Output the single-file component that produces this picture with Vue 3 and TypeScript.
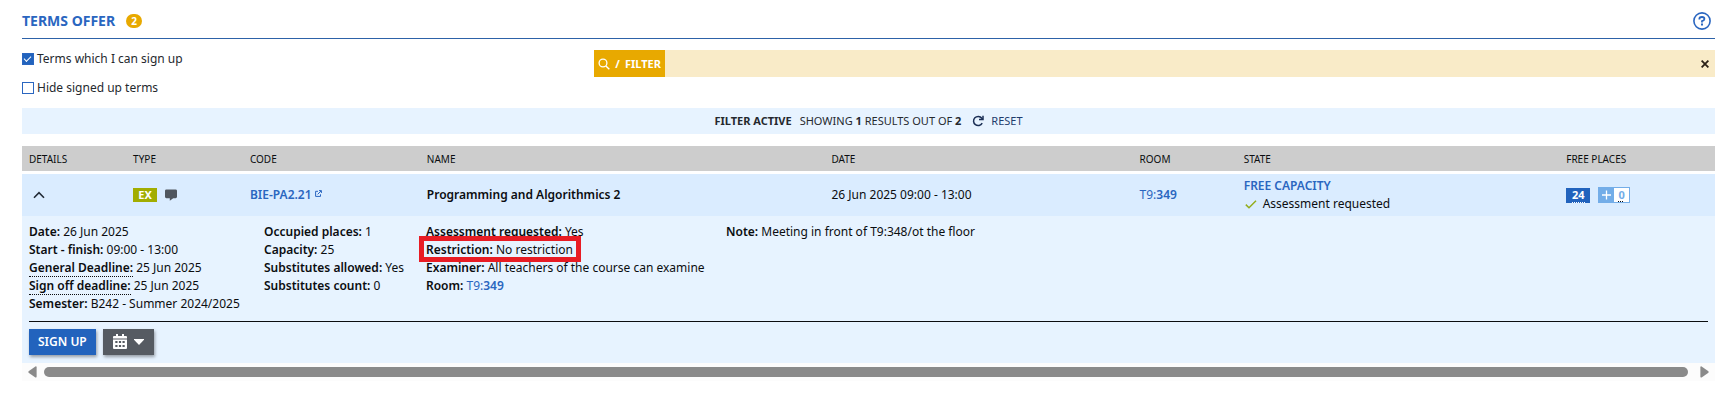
<script setup lang="ts">
import { ref } from 'vue'

interface Fact {
  label: string
  value: string
  hint?: boolean
  marked?: boolean
  room?: string
}

const onlyAvailable = ref(true)
const hideSigned = ref(false)
const filterText = ref('')

const columns: { key: string; title: string }[] = [
  { key: 'details', title: 'DETAILS' },
  { key: 'type', title: 'TYPE' },
  { key: 'code', title: 'CODE' },
  { key: 'name', title: 'NAME' },
  { key: 'date', title: 'DATE' },
  { key: 'room', title: 'ROOM' },
  { key: 'state', title: 'STATE' },
  { key: 'places', title: 'FREE PLACES' },
]

const facts: Fact[][] = [
  [
    { label: 'Date:', value: '26 Jun 2025' },
    { label: 'Start - finish:', value: '09:00 - 13:00' },
    { label: 'General Deadline:', value: '25 Jun 2025', hint: true },
    { label: 'Sign off deadline:', value: '25 Jun 2025', hint: true },
    { label: 'Semester:', value: 'B242 - Summer 2024/2025' },
  ],
  [
    { label: 'Occupied places:', value: '1' },
    { label: 'Capacity:', value: '25' },
    { label: 'Substitutes allowed:', value: 'Yes' },
    { label: 'Substitutes count:', value: '0' },
  ],
  [
    { label: 'Assessment requested:', value: 'Yes' },
    { label: 'Restriction:', value: 'No restriction', marked: true },
    { label: 'Examiner:', value: 'All teachers of the course can examine' },
    { label: 'Room:', value: 'T9:', room: '349' },
  ],
  [{ label: 'Note:', value: 'Meeting in front of T9:348/ot the floor' }],
]
</script>

<template>
  <main class="page">
    <header class="head">
      <h1>TERMS OFFER</h1>
      <span class="count">2</span>
      <button class="help" type="button" aria-label="Help">
        <svg width="18" height="18" viewBox="0 0 18 18" fill="none" stroke="#2a66c0">
          <circle cx="9" cy="9" r="8.1" stroke-width="1.6" />
          <path d="M6.4 7.4V6.6Q6.6 5 9 5T11.4 6.9Q11.4 8.1 9 9.1V10.4" stroke-width="1.8" />
          <path d="M9 11.6V13.5" stroke-width="2" />
        </svg>
      </button>
    </header>

    <section class="controls">
      <div class="checks">
        <label><input v-model="onlyAvailable" type="checkbox" />Terms which I can sign up</label>
        <label><input v-model="hideSigned" type="checkbox" />Hide signed up terms</label>
      </div>
      <form class="filter" @submit.prevent>
        <button class="filter-btn" type="submit">
          <svg width="12" height="12" viewBox="0 0 12 12" fill="none" stroke="#fff">
            <circle cx="5" cy="5" r="3.9" stroke-width="1.3" />
            <path d="M7.9 7.9L11.3 11.3" stroke-width="1.4" />
          </svg>
          <span>/</span><span>FILTER</span>
        </button>
        <input v-model="filterText" class="filter-text" type="text" aria-label="Filter" />
        <button class="clear" type="button" aria-label="Clear filter" @click="filterText = ''">
          <svg width="8" height="8" viewBox="0 0 8 8" stroke="#2b2016" stroke-width="1.8">
            <path d="M.6 .6L7.4 7.4M7.4 .6L.6 7.4" />
          </svg>
        </button>
      </form>
    </section>

    <div class="status">
      <b>FILTER ACTIVE</b>
      <span>SHOWING <b>1</b> RESULTS OUT OF <b>2</b></span>
      <a href="#">
        <svg width="12" height="12" viewBox="0 0 12 12" fill="none" stroke="#1b2f55" stroke-width="1.5">
          <path d="M10.2 8.2A4.6 4.6 0 1 1 9.8 3.2L10.6 4.4" />
          <path d="M11 .8V4.6H7" />
        </svg>
        RESET
      </a>
    </div>

    <table class="terms">
      <colgroup>
        <col v-for="c in columns" :key="c.key" :class="'col-' + c.key" />
      </colgroup>
      <thead>
        <tr>
          <th v-for="c in columns" :key="c.key" scope="col">{{ c.title }}</th>
        </tr>
      </thead>
      <tbody>
        <tr class="gap"><td colspan="8"></td></tr>
        <tr class="term">
          <td>
            <button class="toggle" type="button" aria-label="Hide details" aria-expanded="true">
              <svg width="12" height="8" viewBox="0 0 12 8" fill="none" stroke="#222b36" stroke-width="1.6">
                <path d="M1 6.8L6 1.6L11 6.8" />
              </svg>
            </button>
          </td>
          <td>
            <div class="inline">
              <span class="tag">EX</span>
              <svg width="12" height="12" viewBox="0 0 12 12" fill="#50565e">
                <path d="M1.4 .4H10.6Q12 .4 12 1.8V7.8Q12 9.2 10.6 9.2H8.2L4.8 11.8V9.2H1.4Q0 9.2 0 7.8V1.8Q0 .4 1.4 .4Z" />
              </svg>
            </div>
          </td>
          <td>
            <a class="code" href="#">BIE-PA2.21<svg width="7" height="7" viewBox="0 0 7 7" fill="none" stroke="#2a66c0"><path d="M3 1.3H.6V6.4H5.5V4.3M2.6 4.4L6.2 .8M4 .6H6.4V3" /></svg></a>
          </td>
          <td><b>Programming and Algorithmics 2</b></td>
          <td>26 Jun 2025 09:00 - 13:00</td>
          <td><a href="#">T9:<b>349</b></a></td>
          <td>
            <b class="free">FREE CAPACITY</b>
            <div class="asked">
              <svg width="12" height="9" viewBox="0 0 12 9" fill="none" stroke="#93ad1c" stroke-width="1.5">
                <path d="M.8 4.6L4 7.7L11 .8" />
              </svg>
              Assessment requested
            </div>
          </td>
          <td>
            <div class="inline">
              <span class="left"><span>24</span></span>
              <span class="subs">
                <svg width="15" height="14" viewBox="0 0 15 14" stroke="#fff" stroke-width="1.3">
                  <path d="M7.5 2.5V11.5M3 7H12" />
                </svg>
                <span>0</span>
              </span>
            </div>
          </td>
        </tr>
        <tr class="detail">
          <td colspan="8">
            <div class="facts">
              <div v-for="(group, i) in facts" :key="i">
                <div v-for="f in group" :key="f.label" class="fact" :class="{ marked: f.marked }">
                  <b :class="{ hint: f.hint }">{{ f.label }}</b>&nbsp;<a v-if="f.room" href="#">{{ f.value }}<b>{{ f.room }}</b></a><template v-else>{{ f.value }}</template>
                </div>
              </div>
            </div>
            <div class="actions">
              <button class="signup" type="button">SIGN UP</button>
              <button class="calendar" type="button" aria-label="Calendar">
                <svg width="14" height="16" viewBox="0 0 14 16">
                  <path fill="#fff" d="M3 0H5V2H9V0H11V2H13Q14 2 14 3V4.6H0V3Q0 2 1 2H3ZM0 5.6H14V14Q14 15 13 15H1Q0 15 0 14Z" />
                  <path fill="#565b62" d="M2.3 7H4.5V9H2.3ZM5.9 7H8.1V9H5.9ZM9.5 7H11.7V9H9.5ZM2.3 11H4.5V13H2.3ZM5.9 11H8.1V13H5.9ZM9.5 11H11.7V13H9.5Z" />
                </svg>
                <svg width="10" height="6" viewBox="0 0 10 6"><path fill="#fff" d="M0 0H10V.8L5 6L0 .8Z" /></svg>
              </button>
            </div>
          </td>
        </tr>
      </tbody>
    </table>

    <div class="scroll" aria-hidden="true">
      <svg width="9" height="12" viewBox="0 0 9 12"><path fill="#8a8a8a" d="M7.4 .4Q8.6 0 8.6 1.2V10.8Q8.6 12 7.4 11.4L.6 6.7Q0 6 .6 5.3Z" /></svg>
      <div class="thumb"></div>
      <svg width="9" height="12" viewBox="0 0 9 12"><path fill="#8a8a8a" d="M1.6 .4Q.4 0 .4 1.2V10.8Q.4 12 1.6 11.4L8.4 6.7Q9 6 8.4 5.3Z" /></svg>
    </div>
  </main>
</template>

<style>
body {
  margin: 0;
  background: #fff;
}
</style>

<style scoped>
.page {
  padding: 4px 14px 0 22px;
  font: 12px/18px "Noto Sans", "Open Sans", sans-serif;
  color: #0b0d10;
}
.page *,
.page *::after {
  box-sizing: border-box;
}
svg {
  display: block;
  flex: none;
}
b {
  font-weight: 600;
}
button {
  display: flex;
  align-items: center;
  margin: 0;
  padding: 0;
  border: 0;
  background: none;
  font: inherit;
  cursor: pointer;
}
a {
  color: #2a66c0;
  text-decoration: none;
}
.head {
  display: flex;
  align-items: center;
  height: 35px;
  border-bottom: 1px solid #2d62a8;
}
h1 {
  margin: 0;
  font-size: 14px;
  font-weight: 700;
  color: #2a66c0;
}
.count {
  margin-left: 11px;
  width: 16px;
  border-radius: 7px;
  background: #e8a900;
  color: #fff;
  font-size: 10px;
  line-height: 14px;
  font-weight: 700;
  text-align: center;
}
.help {
  margin: 0 4px 0 auto;
}
.controls {
  display: grid;
  grid-template-columns: 1fr 2fr;
  gap: 12px;
  margin-top: 11px;
}
.checks {
  display: flex;
  flex-direction: column;
  gap: 11px;
}
.checks label {
  display: flex;
  align-items: center;
  gap: 3px;
  color: #25292e;
}
.checks input {
  appearance: none;
  margin: 0;
  width: 12px;
  height: 12px;
  border: 1px solid #2a66c0;
  background: #fff;
}
.checks input:checked {
  background: #2263bd;
}
.checks input:checked::before {
  content: "";
  display: block;
  width: 6px;
  height: 3px;
  margin: 2px 1px;
  border: solid #fff;
  border-width: 0 0 1px 1px;
  transform: rotate(-45deg);
}
.filter {
  display: flex;
  height: 27px;
  background: #f9ebc8;
}
.filter-btn {
  gap: 5px;
  padding: 0 4px;
  background: #e8a900;
  color: #fff;
  font-size: 11px;
  font-weight: 700;
}
.filter-text {
  flex: 1;
  min-width: 0;
  border: 0;
  padding: 0 8px;
  background: none;
  font: inherit;
  outline: none;
}
.clear {
  padding: 0 6px;
}
.status {
  display: flex;
  justify-content: center;
  align-items: center;
  gap: 8px;
  height: 26px;
  margin-top: 11px;
  background: #e7f3ff;
  color: #25292e;
  font-size: 11px;
}
.status b {
  font-weight: 700;
}
.status a {
  display: flex;
  align-items: center;
  gap: 7px;
  margin-left: 3px;
  color: #1f3c6d;
}
.terms {
  width: 100%;
  margin-top: 12px;
  table-layout: fixed;
  border-collapse: collapse;
}
.col-details { width: 6.15%; }
.col-type { width: 6.9%; }
.col-code { width: 10.45%; }
.col-name { width: 23.9%; }
.col-date { width: 18.2%; }
.col-room { width: 6.15%; }
.col-state { width: 19.05%; }
.col-places { width: 9.2%; }
th {
  height: 25px;
  padding: 0 7px;
  background: #cdcdcd;
  font-size: 10px;
  font-weight: 400;
  text-align: left;
}
td {
  padding: 0 7px;
}
.gap td {
  height: 3px;
}
.term td {
  height: 42px;
  background: #daecff;
}
.toggle {
  margin-left: 4px;
}
.inline {
  display: flex;
  align-items: center;
  gap: 8px;
}
.tag {
  width: 24px;
  background: #a2ad00;
  color: #fff;
  font-weight: 700;
  font-size: 11px;
  line-height: 14px;
  text-align: center;
}
.code {
  display: flex;
  gap: 3px;
  align-items: center;
  font-weight: 600;
}
.code svg {
  margin-bottom: 4px;
}
.free {
  display: block;
  color: #2a66c0;
}
.asked {
  display: flex;
  align-items: center;
  gap: 6px;
  padding-left: 1px;
}
.left {
  width: 24px;
  height: 15px;
  background: #2263bd;
  color: #fff;
  font-weight: 700;
  font-size: 11px;
  line-height: 14px;
  text-align: center;
}
.left span {
  display: inline-block;
  border-bottom: 1px dotted #fff;
}
.subs {
  display: flex;
  width: 32px;
  height: 16px;
  border: 1px solid #73ade8;
  background: #73ade8;
}
.subs span {
  flex: 1;
  background: #fff;
  color: #73ade8;
  font-weight: 700;
  font-size: 11px;
  line-height: 14px;
  text-align: center;
  text-decoration: underline dotted #0b0d10 1px;
  text-underline-offset: 2px;
}
.detail td {
  padding: 7px 7px 8px;
  background: #e7f3ff;
}
.facts {
  display: grid;
  grid-template-columns: 211px 138px 276px 1fr;
  gap: 24px;
  padding-bottom: 8px;
  border-bottom: 1px solid #0b0d10;
}
.fact {
  position: relative;
  height: 18px;
  white-space: nowrap;
}
.hint {
  border-bottom: 1px dotted #0b0d10;
}
.marked::after {
  content: "";
  position: absolute;
  top: -5px;
  left: -7px;
  width: 162px;
  height: 26px;
  border: 5px solid #e81c24;
}
.actions {
  display: flex;
  gap: 7px;
  padding-top: 7px;
}
.actions button {
  height: 26px;
  color: #fff;
  font-weight: 600;
  box-shadow: 1px 2px 3px rgba(0, 0, 0, 0.35);
}
.actions .signup {
  padding: 0 9px;
  background: #2263bd;
}
.calendar {
  gap: 7px;
  padding: 0 10px;
  background: #565b62;
}
.scroll {
  display: flex;
  align-items: center;
  gap: 7px;
  height: 18px;
  padding: 0 6px;
  background: #fcfcfc;
}
.thumb {
  flex: 1;
  height: 10px;
  margin-right: 5px;
  border-radius: 5px;
  background: #8a8a8a;
}
</style>
